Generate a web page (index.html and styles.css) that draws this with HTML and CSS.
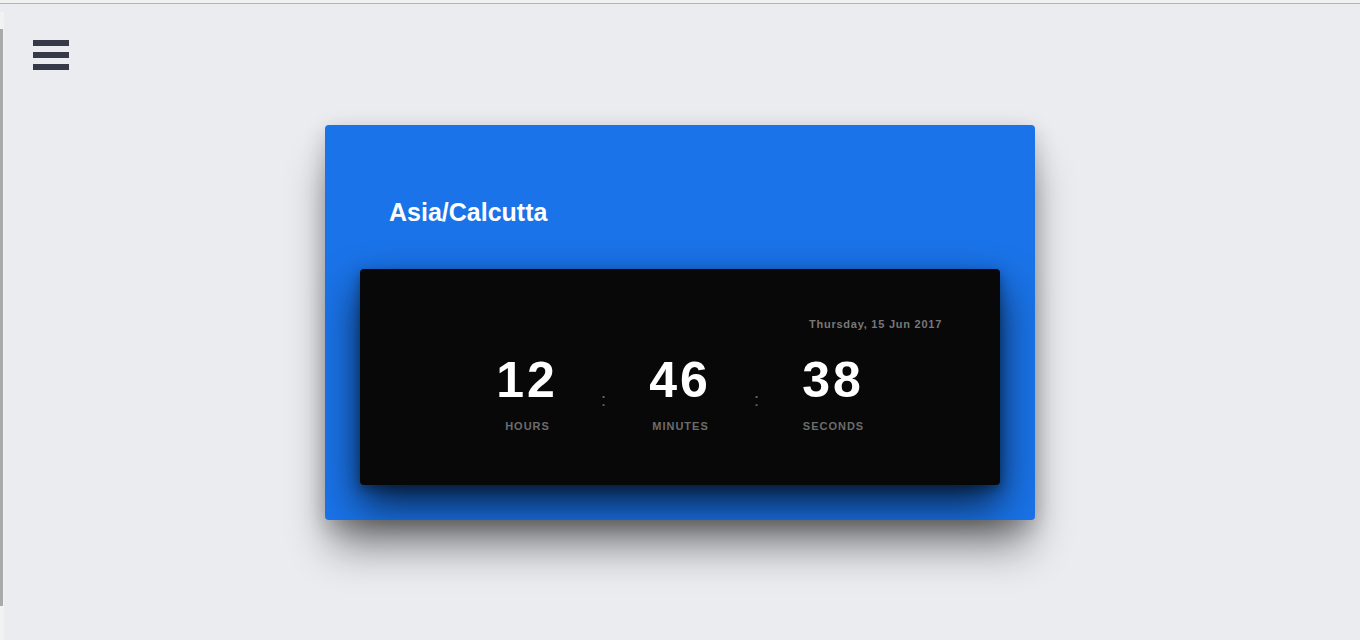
FILE: index.html
```html
<!DOCTYPE html>
<html lang="en">
<head>
<meta charset="utf-8">
<title>World Clock</title>
<link rel="stylesheet" href="styles.css">
</head>
<body>
<div class="topline"></div>
<div class="edge"><div class="edge-bar"></div></div>
<div class="page">
  <header class="header">
    <button class="menu" aria-label="Menu">
      <span class="menu-bar"></span>
      <span class="menu-bar"></span>
      <span class="menu-bar"></span>
    </button>
  </header>
  <main class="card">
    <h1 class="zone">Asia/Calcutta</h1>
    <section class="clock">
      <div class="date">Thursday, 15 Jun 2017</div>
      <div class="time">
        <div class="unit">
          <div class="num">12</div>
          <div class="label">HOURS</div>
        </div>
        <div class="colon">:</div>
        <div class="unit">
          <div class="num">46</div>
          <div class="label">MINUTES</div>
        </div>
        <div class="colon">:</div>
        <div class="unit">
          <div class="num">38</div>
          <div class="label">SECONDS</div>
        </div>
      </div>
    </section>
  </main>
</div>
</body>
</html>
```
FILE: styles.css
```css
html, body {
  margin: 0;
  padding: 0;
}
body {
  background: #ebecf0;
  font-family: "Liberation Sans", Arial, sans-serif;
  width: 1360px;
  height: 640px;
  overflow: hidden;
}
.topline {
  height: 3px;
  background: #f1f1f1;
  border-bottom: 1px solid #b4b4b4;
}
.edge {
  position: fixed;
  left: 0;
  top: 12px;
  bottom: 0;
  width: 4px;
  background: #f2f2f2;
  padding-top: 17px;
  box-sizing: border-box;
}
.edge-bar {
  width: 3px;
  height: 577px;
  background: #a9a9a9;
}
.page {
  display: flex;
  flex-direction: column;
}
.header {
  padding: 36px 0 0 33px;
  height: 30px;
}
.menu {
  display: flex;
  flex-direction: column;
  gap: 6px;
  padding: 0;
  border: 0;
  background: none;
  width: 36px;
  cursor: pointer;
}
.menu-bar {
  display: block;
  width: 36px;
  height: 6px;
  background: #363a48;
}
.card {
  margin: 55px auto 0;
  width: 710px;
  height: 395px;
  box-sizing: border-box;
  padding: 72px 35px 35px;
  background: #1a73e8;
  border-radius: 4px;
  box-shadow: 0 32px 40px -6px rgba(0, 0, 0, 0.45), 0 6px 22px rgba(0, 0, 0, 0.18);
  display: flex;
  flex-direction: column;
}
.zone {
  margin: 0 0 42px 29px;
  font-size: 25px;
  line-height: 30px;
  font-weight: bold;
  color: #ffffff;
}
.clock {
  height: 216px;
  box-sizing: border-box;
  background: #080808;
  border-radius: 4px;
  box-shadow: 0 20px 40px rgba(0, 0, 0, 0.72), 0 4px 12px rgba(0, 0, 0, 0.35);
  padding-top: 48px;
  display: flex;
  flex-direction: column;
}
.date {
  align-self: flex-end;
  margin-right: 58px;
  font-size: 11px;
  line-height: 14px;
  font-weight: bold;
  letter-spacing: 0.75px;
  color: #787878;
}
.time {
  margin-top: 24px;
  display: flex;
  justify-content: center;
  align-items: flex-start;
}
.unit {
  width: 100px;
  display: flex;
  flex-direction: column;
  align-items: center;
}
.num {
  font-size: 50px;
  line-height: 50px;
  font-weight: bold;
  color: #ffffff;
  letter-spacing: 3px;
}
.label {
  margin-top: 14px;
  font-size: 11px;
  line-height: 14px;
  font-weight: bold;
  letter-spacing: 1px;
  padding-left: 1px;
  color: #6c6c6c;
}
.colon {
  width: 53px;
  text-align: center;
  margin-top: 36px;
  font-size: 18px;
  line-height: 18px;
  color: #6a6a6a;
}
```
